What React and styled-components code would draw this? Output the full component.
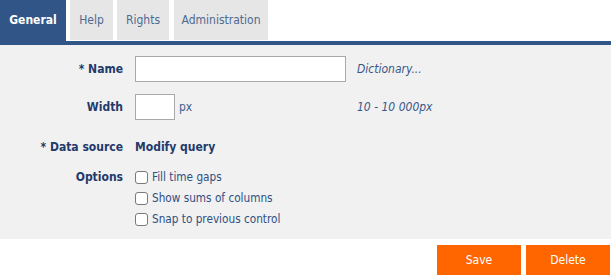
import React from "react";
import styled, { createGlobalStyle } from "styled-components";

const Global = createGlobalStyle`
  html, body { margin: 0; padding: 0; background: #ffffff; }
  body { font-family: "DejaVu Sans Condensed", "DejaVu Sans", sans-serif; }
  * { box-sizing: border-box; }
`;

const Page = styled.div`
  width: 611px;
  display: flex;
  flex-direction: column;
`;

const TabStrip = styled.div`
  display: flex;
  align-items: flex-start;
  height: 45px;
  border-bottom: 4px solid #325587;
`;

const Tab = styled.div`
  width: ${(p) => p.$w}px;
  margin-left: ${(p) => p.$ml || 0}px;
  height: ${(p) => (p.$active ? "41px" : "40px")};
  display: flex;
  align-items: center;
  justify-content: center;
  font-size: 12px;
  font-weight: ${(p) => (p.$active ? 700 : 400)};
  color: ${(p) => (p.$active ? "#ffffff" : "#4f6a8f")};
  background: ${(p) => (p.$active ? "#325587" : "#e6e6e6")};
  padding-bottom: 1px;
`;

const Panel = styled.div`
  background: #f1f1f1;
  padding: 11px 0 10px;
  display: grid;
  grid-template-columns: 123px 211px auto;
  column-gap: 12px;
  align-items: start;
`;

const Label = styled.div`
  text-align: right;
  font-size: 12px;
  font-weight: 700;
  color: #1f3a6b;
  height: ${(p) => p.$h || 26}px;
  line-height: ${(p) => p.$h || 26}px;
  margin-top: ${(p) => p.$mt || 0}px;
`;

const Cell = styled.div`
  display: flex;
  align-items: center;
  gap: 4px;
  margin-top: ${(p) => p.$mt || 0}px;
  grid-column: ${(p) => p.$span || "auto"};
`;

const TextInput = styled.input`
  width: ${(p) => p.$w}px;
  height: 26px;
  border: 1px solid #a9a9a9;
  background: #ffffff;
  margin: 0;
  padding: 0 4px;
  font: inherit;
`;

const Unit = styled.span`
  font-size: 12px;
  color: #3f5d8c;
`;

const Hint = styled.div`
  font-size: 12px;
  font-style: italic;
  color: #3b5788;
  margin-left: -1px;
  height: 26px;
  line-height: 26px;
  margin-top: ${(p) => p.$mt || 0}px;
`;

const LinkText = styled.span`
  font-size: 12px;
  font-weight: 700;
  color: #1f3a6b;
  line-height: 26px;
`;

const Checks = styled.div`
  display: flex;
  flex-direction: column;
  gap: 1px;
  margin-top: 7px;
  grid-column: 2 / 4;
`;

const CheckRow = styled.label`
  display: flex;
  align-items: center;
  gap: 4px;
  height: 20px;
  font-size: 11.7px;
  color: #2f4f82;
`;

const Box = styled.span`
  width: 13px;
  height: 13px;
  border: 1px solid #7a7a7a;
  border-radius: 3px;
  background: #ffffff;
  flex: none;
`;

const Footer = styled.div`
  display: flex;
  justify-content: flex-end;
  gap: 5px;
  padding: 6px 1px 0 0;
`;

const Button = styled.button`
  width: 84px;
  height: 30px;
  border: none;
  margin: 0;
  background: #ff6600;
  color: #ffffff;
  font-family: inherit;
  font-size: 12px;
  padding: 0;
`;

export default function App() {
  return (
    <Page>
      <Global />
      <TabStrip>
        <Tab $active $w={66}>General</Tab>
        <Tab $w={43} $ml={4}>Help</Tab>
        <Tab $w={52} $ml={4}>Rights</Tab>
        <Tab $w={94} $ml={5}>Administration</Tab>
      </TabStrip>
      <Panel>
        <Label>* Name</Label>
        <Cell>
          <TextInput $w={211} />
        </Cell>
        <Hint>Dictionary...</Hint>

        <Label $mt={12}>Width</Label>
        <Cell $mt={12}>
          <TextInput $w={40} />
          <Unit>px</Unit>
        </Cell>
        <Hint $mt={12}>10 - 10 000px</Hint>

        <Label $mt={14}>* Data source</Label>
        <Cell $mt={14} $span="2 / 4">
          <LinkText>Modify query</LinkText>
        </Cell>

        <Label $mt={7} $h={20}>Options</Label>
        <Checks>
          <CheckRow><Box />Fill time gaps</CheckRow>
          <CheckRow><Box />Show sums of columns</CheckRow>
          <CheckRow><Box />Snap to previous control</CheckRow>
        </Checks>
      </Panel>
      <Footer>
        <Button>Save</Button>
        <Button>Delete</Button>
      </Footer>
    </Page>
  );
}
